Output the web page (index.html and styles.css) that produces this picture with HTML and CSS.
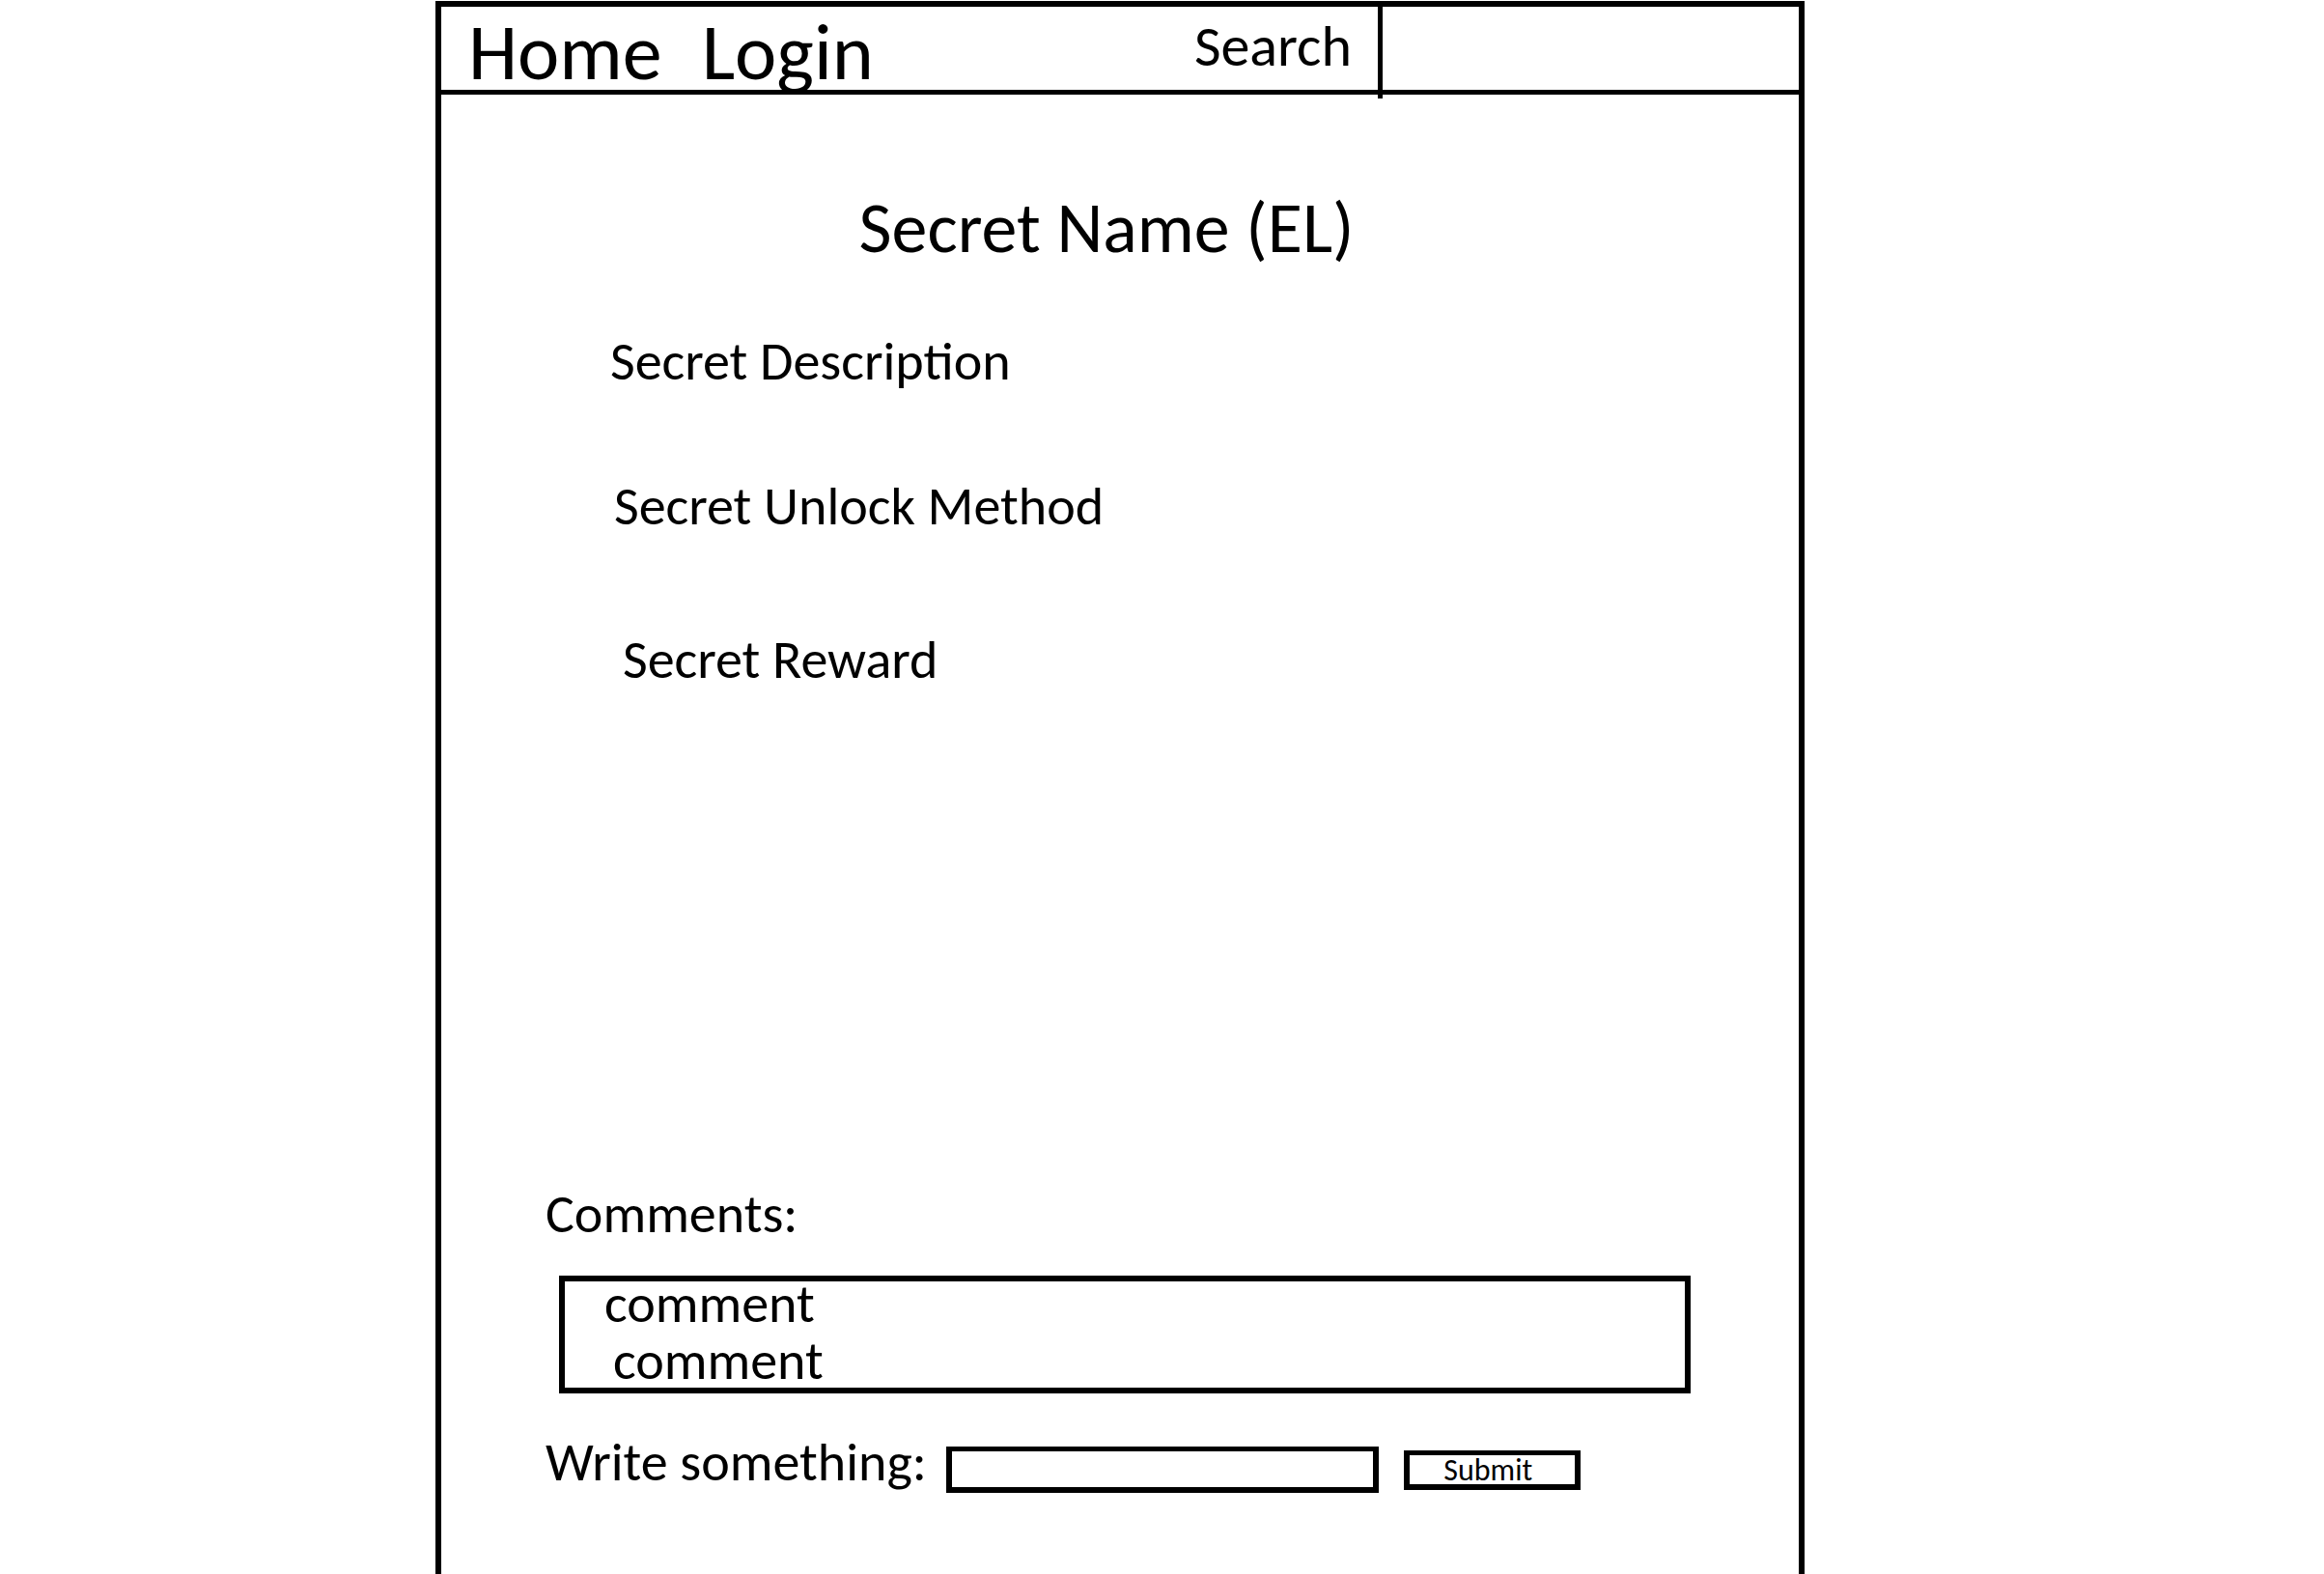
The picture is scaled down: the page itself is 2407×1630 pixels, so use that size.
FILE: index.html
```html
<!DOCTYPE html>
<html lang="en">
<head>
<meta charset="utf-8">
<title>Secret Name (EL)</title>
<link rel="stylesheet" href="styles.css">
</head>
<body>
<div class="page">
  <header class="topbar">
    <nav class="nav-links">
      <a class="nav-link" href="#">Home</a>
      <a class="nav-link" href="#">Login</a>
    </nav>
    <span class="search-label">Search</span>
    <div class="search-field"></div>
  </header>
  <main class="content">
    <h1 class="title">Secret Name (EL)</h1>
    <p class="detail detail-desc">Secret Description</p>
    <p class="detail detail-unlock">Secret Unlock Method</p>
    <p class="detail detail-reward">Secret Reward</p>
    <h2 class="comments-label">Comments:</h2>
    <div class="comments-box">
      <p class="comment comment-first">comment</p>
      <p class="comment comment-second">comment</p>
    </div>
    <form class="write-row">
      <label class="write-label" for="msg">Write something:</label>
      <input class="write-input" id="msg" type="text">
      <button class="submit-btn" type="button">Submit</button>
    </form>
  </main>
</div>
</body>
</html>
```
FILE: styles.css
```css
* { box-sizing: border-box; }

html, body {
  margin: 0;
  padding: 0;
  background: #ffffff;
}

body {
  font-family: Carlito, Calibri, "Open Sans", sans-serif;
  color: #000000;
  overflow: hidden;
}

.page {
  margin: 1px 0 0 451px;
  width: 1418px;
  min-height: 1629px;
  border-left: 6px solid #000;
  border-right: 6px solid #000;
}

.topbar {
  display: flex;
  align-items: flex-start;
  height: 97px;
  border-top: 6px solid #000;
  border-bottom: 5px solid #000;
}

.nav-links {
  display: flex;
  gap: 41px;
  padding-left: 28px;
  margin-top: 6px;
  flex: 1;
}

.nav-link {
  font-size: 82px;
  line-height: 1;
  color: #000;
  text-decoration: none;
}

.search-label {
  font-size: 60px;
  line-height: 1;
  margin-top: 11px;
  padding-right: 27px;
}

.search-field {
  align-self: stretch;
  width: 436px;
  margin-bottom: -9px;
  border-left: 5px solid #000;
}

.content {
  display: flex;
  flex-direction: column;
  align-items: flex-start;
}

.title {
  align-self: stretch;
  margin: 101px 28px 0 0;
  font-size: 74px;
  line-height: 1;
  font-weight: normal;
  text-align: center;
}

.detail {
  margin: 0;
  font-size: 56px;
  line-height: 1;
}

.detail-desc { margin: 73px 0 0 175px; }
.detail-unlock { margin: 94px 0 0 179px; }
.detail-reward { margin: 103px 0 0 188px; }

.comments-label {
  margin: 518px 0 0 108px;
  font-size: 56px;
  line-height: 1;
  font-weight: normal;
}

.comments-box {
  margin: 36px 0 0 122px;
  width: 1172px;
  height: 122px;
  border: 6px solid #000;
}

.comment {
  margin: 0;
  font-size: 56px;
  line-height: 46px;
}

.comment-first { margin: 0 0 0 41px; }
.comment-second { margin: 13px 0 0 50px; }

.write-row {
  display: flex;
  align-items: flex-start;
  margin: 43px 0 0 108px;
}

.write-label {
  font-size: 56px;
  line-height: 1;
}

.write-input {
  margin: 12px 0 0 20px;
  width: 448px;
  height: 48px;
  border: 6px solid #000;
  border-top-width: 5px;
  border-radius: 0;
  padding: 0;
  background: #fff;
  outline: none;
}

.submit-btn {
  margin: 16px 0 0 26px;
  width: 183px;
  height: 41px;
  border: 6px solid #000;
  border-top-width: 5px;
  border-radius: 0;
  padding: 0 8px 0 0;
  background: #fff;
  font-family: Carlito, Calibri, "Open Sans", sans-serif;
  font-size: 32px;
  line-height: 1;
  color: #000;
}
```
